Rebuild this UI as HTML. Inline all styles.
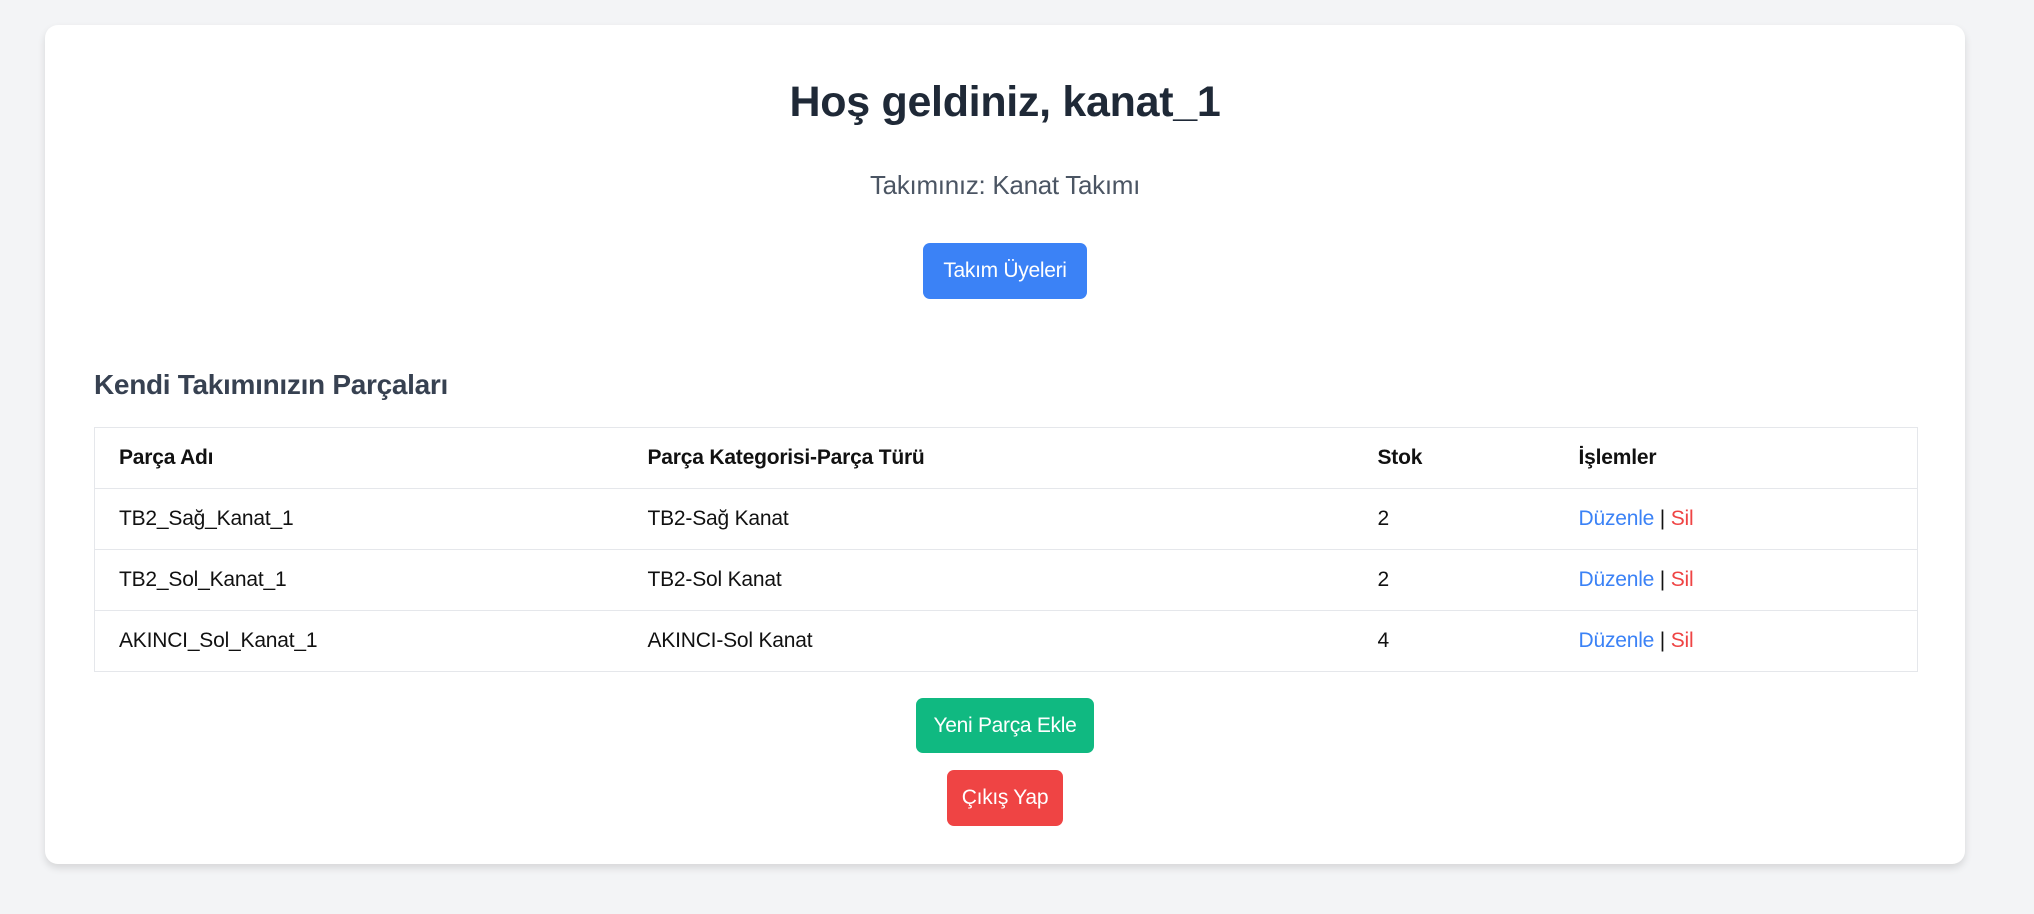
<!DOCTYPE html>
<html><head><meta charset="utf-8"><style>
*{margin:0;padding:0;box-sizing:border-box}
body{width:2034px;height:914px;background:#f3f4f6;font-family:"Liberation Sans",sans-serif;position:relative;overflow:hidden}
.card{position:absolute;left:45px;top:25px;width:1920px;height:839px;background:#fff;border-radius:13px;box-shadow:0 4px 8px rgba(0,0,0,.12)}
.abs{position:absolute}
.c{left:0;right:0;text-align:center}
h1{font-size:43px;font-weight:bold;color:#1f2937;top:52px;line-height:50px;letter-spacing:-0.3px}
.sub{font-size:26px;color:#4b5563;top:146px;line-height:28px;letter-spacing:-0.3px}
.btn{position:absolute;color:#fff;font-size:21px;border-radius:7px;display:flex;align-items:center;justify-content:center;letter-spacing:-0.3px}
h2{font-size:28px;font-weight:bold;color:#374151;left:49px;top:344px;line-height:32px;letter-spacing:-0.3px}
table{position:absolute;left:49px;top:402px;width:1824px;border-collapse:collapse;border:1px solid #e5e7eb;font-size:21px;color:#111;letter-spacing:-0.2px}
td,th{height:61px;border-bottom:1px solid #e5e7eb;text-align:left;padding-left:24px;vertical-align:middle}
th{font-weight:bold}
.b{color:#3b82f6}.r{color:#ef4444}
</style></head><body>
<div class="card">
<h1 class="abs c">Hoş geldiniz, kanat_1</h1>
<div class="abs c sub">Takımınız: Kanat Takımı</div>
<div class="btn" style="left:878px;top:218px;width:164px;height:56px;background:#3b82f6">Takım Üyeleri</div>
<h2 class="abs">Kendi Takımınızın Parçaları</h2>
<table>
<tr><th style="width:529px">Parça Adı</th><th style="width:730px">Parça Kategorisi-Parça Türü</th><th style="width:201px">Stok</th><th>İşlemler</th></tr>
<tr><td>TB2_Sağ_Kanat_1</td><td>TB2-Sağ Kanat</td><td>2</td><td><span class="b">Düzenle</span> | <span class="r">Sil</span></td></tr>
<tr><td>TB2_Sol_Kanat_1</td><td>TB2-Sol Kanat</td><td>2</td><td><span class="b">Düzenle</span> | <span class="r">Sil</span></td></tr>
<tr><td>AKINCI_Sol_Kanat_1</td><td>AKINCI-Sol Kanat</td><td>4</td><td><span class="b">Düzenle</span> | <span class="r">Sil</span></td></tr>
</table>
<div class="btn" style="left:871px;top:673px;width:178px;height:55px;background:#10b981">Yeni Parça Ekle</div>
<div class="btn" style="left:902px;top:745px;width:116px;height:56px;background:#ef4444">Çıkış Yap</div>
</div>
</body></html>
